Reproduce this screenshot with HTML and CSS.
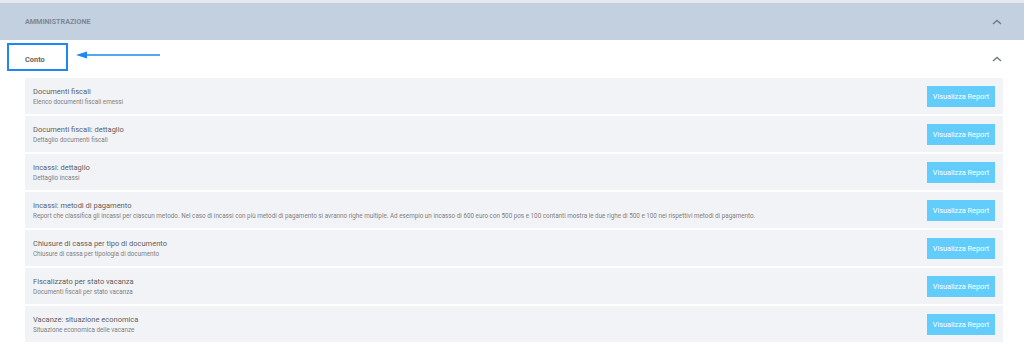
FILE: index.html
```html
<!DOCTYPE html>
<html lang="it">
<head>
<meta charset="UTF-8">
<meta name="viewport" content="width=device-width, initial-scale=1.0">
<title>Amministrazione - Conto</title>
<link rel="stylesheet" href="styles.css">
</head>
<body>

<div class="top-strip"></div>

<div class="section-header">
    <span class="section-title">AMMINISTRAZIONE</span>
    <svg class="chevron" width="10" height="6" viewBox="0 0 10 6"><path d="M1 5 L5 1.5 L9 5" fill="none" stroke="#6f7b8a" stroke-width="1.4"/></svg>
</div>

<div class="group-header">
    <span class="group-title">Conto</span>
    <svg class="chevron" width="10" height="6" viewBox="0 0 10 6"><path d="M1 5 L5 1.5 L9 5" fill="none" stroke="#6f7b8a" stroke-width="1.4"/></svg>
    <div class="highlight-box"></div>
    <svg class="pointer-arrow" width="86" height="8" viewBox="0 0 86 8"><path d="M8 4 L84 4" stroke="#1e88f0" stroke-width="1.6"/><path d="M0 4 L11 0.5 L11 7.5 Z" fill="#1e88f0"/></svg>
</div>

<div class="report-list">
    <div class="report-row">
        <div class="report-info">
            <div class="report-name">Documenti fiscali</div>
            <div class="report-desc">Elenco documenti fiscali emessi</div>
        </div>
        <button class="button">Visualizza Report</button>
    </div>
    <div class="report-row">
        <div class="report-info">
            <div class="report-name">Documenti fiscali: dettaglio</div>
            <div class="report-desc">Dettaglio documenti fiscali</div>
        </div>
        <button class="button">Visualizza Report</button>
    </div>
    <div class="report-row">
        <div class="report-info">
            <div class="report-name">Incassi: dettaglio</div>
            <div class="report-desc">Dettaglio incassi</div>
        </div>
        <button class="button">Visualizza Report</button>
    </div>
    <div class="report-row">
        <div class="report-info">
            <div class="report-name">Incassi: metodi di pagamento</div>
            <div class="report-desc">Report che classifica gli incassi per ciascun metodo. Nel caso di incassi con più metodi di pagamento si avranno righe multiple. Ad esempio un incasso di 600 euro con 500 pos e 100 contanti mostra le due righe di 500 e 100 nei rispettivi metodi di pagamento.</div>
        </div>
        <button class="button">Visualizza Report</button>
    </div>
    <div class="report-row">
        <div class="report-info">
            <div class="report-name">Chiusure di cassa per tipo di documento</div>
            <div class="report-desc">Chiusure di cassa per tipologia di documento</div>
        </div>
        <button class="button">Visualizza Report</button>
    </div>
    <div class="report-row">
        <div class="report-info">
            <div class="report-name">Fiscalizzato per stato vacanza</div>
            <div class="report-desc">Documenti fiscali per stato vacanza</div>
        </div>
        <button class="button">Visualizza Report</button>
    </div>
    <div class="report-row">
        <div class="report-info">
            <div class="report-name">Vacanze: situazione economica</div>
            <div class="report-desc">Situazione economica delle vacanze</div>
        </div>
        <button class="button">Visualizza Report</button>
    </div>
</div>

</body>
</html>
```

FILE: styles.css
```css
body {
    margin: 0;
    font-family: 'Roboto', 'Liberation Sans', sans-serif;
    background-color: #fff;
    color: #555;
}

.top-strip {
    height: 3px;
    background-color: #e8e9ee;
}

.section-header {
    height: 37px;
    background-color: #c2d0e0;
    display: flex;
    align-items: center;
    justify-content: space-between;
    padding: 0 22px 0 25px;
}

.section-title {
    font-size: 7.2px;
    font-weight: bold;
    color: #7c8796;
}

.group-header {
    position: relative;
    height: 38px;
    display: flex;
    align-items: center;
    justify-content: space-between;
    padding: 0 22px 0 25px;
}

.group-title {
    font-size: 7.4px;
    font-weight: bold;
    color: #666;
    margin-top: 1px;
}

.chevron {
    display: block;
}

.highlight-box {
    position: absolute;
    left: 7px;
    top: 3px;
    width: 57px;
    height: 24px;
    border: 2px solid #1e88f0;
}

.pointer-arrow {
    position: absolute;
    left: 76px;
    top: 11px;
}

.report-list {
    display: flex;
    flex-direction: column;
    gap: 2px;
    margin: 0 21px 0 25px;
}

.report-row {
    height: 36px;
    background-color: #f2f3f7;
    display: flex;
    align-items: center;
    justify-content: space-between;
    padding: 0 8px;
}

.report-name {
    font-size: 7.5px;
    color: #5e5e5e;
    line-height: 11px;
}

.report-desc {
    font-size: 6.3px;
    color: #808080;
    line-height: 9px;
    margin-top: 1px;
}

.button {
    background-color: #62cdfb;
    color: #fff;
    border: none;
    height: 21px;
    width: 68px;
    padding: 0;
    font-family: 'Roboto', 'Liberation Sans', sans-serif;
    font-size: 7.3px;
    flex-shrink: 0;
}
```
